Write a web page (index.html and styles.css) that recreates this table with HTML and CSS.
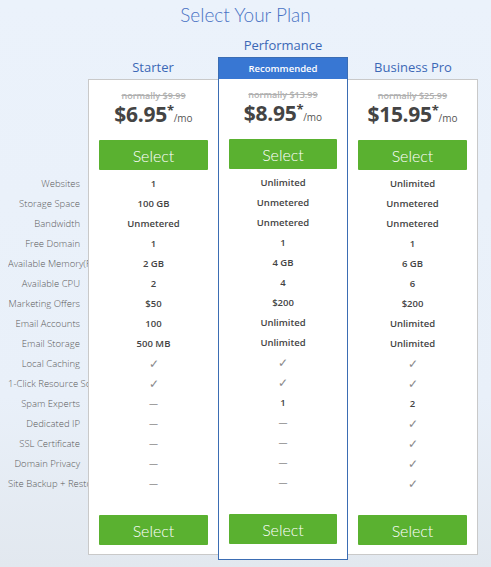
FILE: index.html
```html
<!DOCTYPE html>
<html>
<head>
<meta charset="utf-8">
<link rel="stylesheet" href="styles.css">
</head>
<body>
<h1 class="title">Select Your Plan</h1>
<div class="grid">
  <div class="labels">
    <div class="label">Websites</div>
    <div class="label">Storage Space</div>
    <div class="label">Bandwidth</div>
    <div class="label">Free Domain</div>
    <div class="label">Available Memory(RAM)</div>
    <div class="label">Available CPU</div>
    <div class="label">Marketing Offers</div>
    <div class="label">Email Accounts</div>
    <div class="label">Email Storage</div>
    <div class="label">Local Caching</div>
    <div class="label">1-Click Resource Scaling</div>
    <div class="label">Spam Experts</div>
    <div class="label">Dedicated IP</div>
    <div class="label">SSL Certificate</div>
    <div class="label">Domain Privacy</div>
    <div class="label">Site Backup + Restore</div>
  </div>

  <div class="plan side">
    <div class="plan-name low">Starter</div>
    <div class="card left">
      <div class="old">normally $9.99</div>
      <div class="price">$6.95<sup>*</sup><span class="mo">/mo</span></div>
      <button class="btn">Select</button>
      <div class="rows">
        <div class="val">1</div>
        <div class="val">100 GB</div>
        <div class="val">Unmetered</div>
        <div class="val">1</div>
        <div class="val">2 GB</div>
        <div class="val">2</div>
        <div class="val">$50</div>
        <div class="val">100</div>
        <div class="val">500 MB</div>
        <div class="val check">✓</div>
        <div class="val check">✓</div>
        <div class="val dash">—</div>
        <div class="val dash">—</div>
        <div class="val dash">—</div>
        <div class="val dash">—</div>
        <div class="val dash">—</div>
      </div>
      <button class="btn bottom">Select</button>
    </div>
  </div>

  <div class="plan featured">
    <div class="plan-name">Performance</div>
    <div class="card mid">
      <div class="band">Recommended</div>
      <div class="body">
        <div class="old">normally $13.99</div>
        <div class="price">$8.95<sup>*</sup><span class="mo">/mo</span></div>
        <button class="btn">Select</button>
        <div class="rows">
          <div class="val">Unlimited</div>
          <div class="val">Unmetered</div>
          <div class="val">Unmetered</div>
          <div class="val">1</div>
          <div class="val">4 GB</div>
          <div class="val">4</div>
          <div class="val">$200</div>
          <div class="val">Unlimited</div>
          <div class="val">Unlimited</div>
          <div class="val check">✓</div>
          <div class="val check">✓</div>
          <div class="val">1</div>
          <div class="val dash">—</div>
          <div class="val dash">—</div>
          <div class="val dash">—</div>
          <div class="val dash">—</div>
        </div>
        <button class="btn bottom">Select</button>
      </div>
    </div>
  </div>

  <div class="plan side">
    <div class="plan-name low">Business Pro</div>
    <div class="card right">
      <div class="old">normally $25.99</div>
      <div class="price">$15.95<sup>*</sup><span class="mo">/mo</span></div>
      <button class="btn">Select</button>
      <div class="rows">
        <div class="val">Unlimited</div>
        <div class="val">Unmetered</div>
        <div class="val">Unmetered</div>
        <div class="val">1</div>
        <div class="val">6 GB</div>
        <div class="val">6</div>
        <div class="val">$200</div>
        <div class="val">Unlimited</div>
        <div class="val">Unlimited</div>
        <div class="val check">✓</div>
        <div class="val check">✓</div>
        <div class="val">2</div>
        <div class="val check">✓</div>
        <div class="val check">✓</div>
        <div class="val check">✓</div>
        <div class="val check">✓</div>
      </div>
      <button class="btn bottom">Select</button>
    </div>
  </div>
</div>
</body>
</html>
```

FILE: styles.css
```css
* { box-sizing: border-box; }
html, body { height: 100%; }
body {
  margin: 0;
  background: linear-gradient(#ebf2fb 0%, #e9f0f9 70%, #e2e8ef 100%);
  font-family: "Open Sans", "DejaVu Sans", sans-serif;
  overflow: hidden;
}
.title {
  margin: 0;
  height: 34px;
  padding-top: 3px;
  text-align: center;
  font-family: Lato, "Open Sans", sans-serif;
  font-weight: 300;
  font-size: 19px;
  line-height: 24px;
  color: #4a72c4;
}
.grid {
  display: flex;
  align-items: flex-start;
  padding-left: 8px;
}
.labels {
  width: 80px;
  padding-top: 140px;
  padding-right: 8px;
  overflow: hidden;
}
.label {
  height: 20px;
  line-height: 20px;
  font-size: 9.5px;
  font-weight: 300;
  color: #5a5a5a;
  text-align: right;
  white-space: nowrap;
}
.plan { width: 130px; }
.plan-name {
  height: 23px;
  line-height: 22px;
  text-align: center;
  font-size: 13px;
  color: #3b68b6;
}
.plan-name.low {
  height: 45px;
  padding-top: 22px;
}
.card {
  background: #fff;
  text-align: center;
}
.card.left {
  border: 1px solid #c9c9c9;
  border-right: none;
  padding: 9px 10px 9px 10px;
}
.card.right {
  border: 1px solid #c9c9c9;
  border-left: none;
  padding: 9px 10px 9px 10px;
}
.card.mid {
  border: 1px solid #3b6db3;
  padding: 0;
}
.band {
  height: 21px;
  line-height: 21px;
  background: #3877d3;
  color: #fff;
  font-size: 9.5px;
  font-weight: 600;
}
.body {
  padding: 9px 10px 15px 10px;
}
.old {
  height: 14px;
  line-height: 14px;
  font-size: 9px;
  font-weight: 600;
  color: #b0b0b0;
  text-decoration: line-through;
}
.price {
  height: 37px;
  line-height: 23px;
  font-size: 21px;
  font-weight: 700;
  color: #444;
  letter-spacing: -0.3px;
}
.price sup {
  font-size: 13px;
  line-height: 0;
  vertical-align: 7px;
}
.mo {
  font-size: 10px;
  font-weight: 400;
  letter-spacing: 0;
  color: #555;
}
.btn {
  display: block;
  width: 100%;
  height: 30px;
  border: none;
  border-radius: 1px;
  background: #5ab130;
  color: #fff;
  font-family: Lato, "Open Sans", sans-serif;
  font-weight: 300;
  font-size: 16px;
  padding: 0;
}
.rows {
  padding-top: 4px;
  padding-bottom: 21px;
}
.val {
  height: 20px;
  line-height: 20px;
  font-size: 9.5px;
  font-weight: 600;
  color: #444;
}
.val.check {
  font-size: 12px;
  font-weight: 300;
  color: #8a8a8a;
}
.val.dash {
  font-size: 9px;
  font-weight: 400;
  color: #555;
}
```
